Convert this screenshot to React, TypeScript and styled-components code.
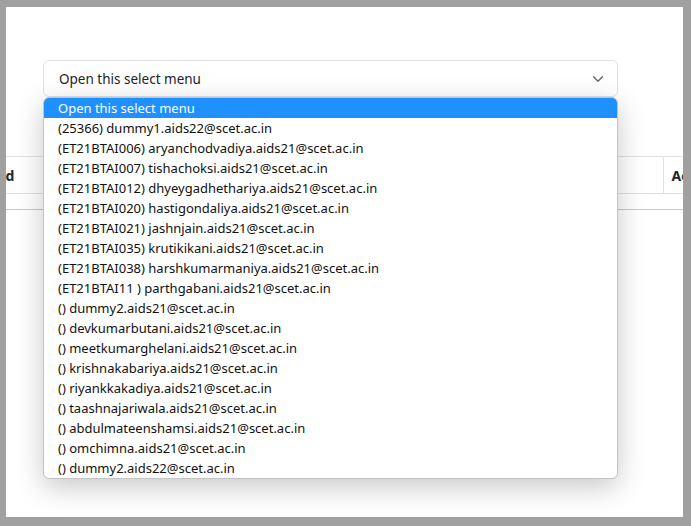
import React, { useLayoutEffect, useRef } from 'react';
import styled, { createGlobalStyle } from 'styled-components';

const GlobalStyle = createGlobalStyle`
  html, body {
    margin: 0;
    padding: 0;
    background: #a0a0a0;
  }
  * {
    box-sizing: border-box;
  }
`;

const Frame = styled.div`
  width: 691px;
  height: 526px;
  padding: 7px 8px 9px 6px;
  background: #a0a0a0;
`;

const Page = styled.div`
  position: relative;
  width: 677px;
  height: 510px;
  background: #ffffff;
  overflow: hidden;
  padding-top: 53px;
  font-family: 'Noto Sans', 'Open Sans', sans-serif;
  color: #212529;
`;

const SelectWrap = styled.div`
  position: relative;
  width: 575px;
  margin-left: 37px;
  z-index: 2;
`;

const SelectBox = styled.div`
  display: flex;
  align-items: center;
  justify-content: space-between;
  height: 37px;
  padding: 0 12px 0 15px;
  border: 1px solid #dee2e6;
  border-radius: 6px;
  background: #ffffff;
  font-size: 13.5px;
  color: #212529;
`;

const Chevron = styled.svg`
  width: 14px;
  height: 14px;
  flex-shrink: 0;
`;

const OptionList = styled.ul`
  position: absolute;
  top: 100%;
  left: 0;
  right: 0;
  margin: 0;
  padding: 0;
  list-style: none;
  background: #ffffff;
  border: 1px solid #c4c4c4;
  border-radius: 6px;
  overflow: hidden;
  box-shadow: 0 8px 28px rgba(0, 0, 0, 0.22);
`;

const OptionItem = styled.li<{ $active?: boolean }>`
  height: 20px;
  line-height: 20px;
  padding-left: 14px;
  font-size: 13px;
  white-space: nowrap;
  color: ${({ $active }) => ($active ? '#ffffff' : '#111111')};
  background: ${({ $active }) => ($active ? '#1e90ff' : 'transparent')};
`;

const TableScroll = styled.div`
  margin-top: 59px;
  width: 100%;
  overflow: hidden;
`;

const Table = styled.table`
  width: 821px;
  table-layout: fixed;
  border-collapse: collapse;
  font-size: 14px;
`;

const HeadCell = styled.th<{ $divider?: boolean }>`
  height: 37px;
  padding: 8px;
  text-align: left;
  font-weight: 700;
  color: #212529;
  border-top: 1px solid #dee2e6;
  border-bottom: 1px solid #dee2e6;
  border-left: ${({ $divider }) => ($divider ? '1px solid #dee2e6' : 'none')};
  white-space: nowrap;
  overflow: hidden;
`;

const EmptyCell = styled.td`
  height: 16px;
  padding: 0;
  border-bottom: 1px solid #c8c9ca;
`;

const options = [
  'Open this select menu',
  '(25366) dummy1.aids22@scet.ac.in',
  '(ET21BTAI006) aryanchodvadiya.aids21@scet.ac.in',
  '(ET21BTAI007) tishachoksi.aids21@scet.ac.in',
  '(ET21BTAI012) dhyeygadhethariya.aids21@scet.ac.in',
  '(ET21BTAI020) hastigondaliya.aids21@scet.ac.in',
  '(ET21BTAI021) jashnjain.aids21@scet.ac.in',
  '(ET21BTAI035) krutikikani.aids21@scet.ac.in',
  '(ET21BTAI038) harshkumarmaniya.aids21@scet.ac.in',
  '(ET21BTAI11 ) parthgabani.aids21@scet.ac.in',
  '() dummy2.aids21@scet.ac.in',
  '() devkumarbutani.aids21@scet.ac.in',
  '() meetkumarghelani.aids21@scet.ac.in',
  '() krishnakabariya.aids21@scet.ac.in',
  '() riyankkakadiya.aids21@scet.ac.in',
  '() taashnajariwala.aids21@scet.ac.in',
  '() abdulmateenshamsi.aids21@scet.ac.in',
  '() omchimna.aids21@scet.ac.in',
  '() dummy2.aids22@scet.ac.in',
];

const columns = [
  { title: 'Id', width: 143 },
  { title: 'Name', width: 180 },
  { title: 'Email', width: 220 },
  { title: 'Semester', width: 128 },
  { title: 'Action', width: 150 },
];

const App: React.FC = () => {
  const scrollRef = useRef<HTMLDivElement>(null);

  // the table is scrolled a little to the right, like in the screenshot
  useLayoutEffect(() => {
    if (scrollRef.current) scrollRef.current.scrollLeft = 14;
  }, []);

  return (
    <>
      <GlobalStyle />
      <Frame>
        <Page>
          <SelectWrap>
            <SelectBox>
              <span>Open this select menu</span>
              <Chevron viewBox="0 0 16 16" fill="none">
                <path d="M3 5.5l5 5 5-5" stroke="#5f6670" strokeWidth="1.5" strokeLinecap="round" strokeLinejoin="round" />
              </Chevron>
            </SelectBox>
            <OptionList>
              {options.map((opt, i) => (
                <OptionItem key={i} $active={i === 0}>
                  {opt}
                </OptionItem>
              ))}
            </OptionList>
          </SelectWrap>

          <TableScroll ref={scrollRef}>
            <Table>
              <colgroup>
                {columns.map((c) => (
                  <col key={c.title} style={{ width: c.width }} />
                ))}
              </colgroup>
              <thead>
                <tr>
                  {columns.map((c, i) => (
                    <HeadCell key={c.title} $divider={i > 0}>
                      {c.title}
                    </HeadCell>
                  ))}
                </tr>
              </thead>
              <tbody>
                <tr>
                  <EmptyCell colSpan={columns.length} />
                </tr>
              </tbody>
            </Table>
          </TableScroll>
        </Page>
      </Frame>
    </>
  );
};

export default App;
